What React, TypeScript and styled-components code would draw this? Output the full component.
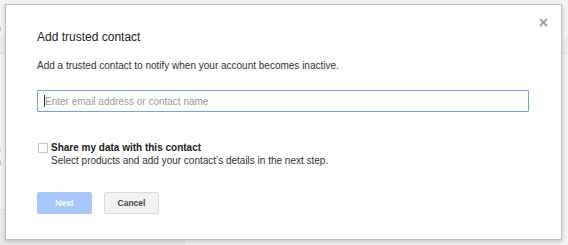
import React from "react";
import styled, { createGlobalStyle } from "styled-components";

const Global = createGlobalStyle`
  html, body { margin: 0; padding: 0; }
  body {
    width: 568px;
    height: 245px;
    overflow: hidden;
    background: #f2f2f2;
    font-family: "Liberation Sans", Arial, sans-serif;
  }
`;

const Page = styled.div`
  position: relative;
  width: 568px;
  height: 245px;
  display: flex;
  flex-direction: column;
  background: #f3f3f3;
  color: #b8b8b8;
  font-size: 10px;
  overflow: hidden;
`;

const PageTop = styled.div`
  box-sizing: border-box;
  height: 37px;
  padding-top: 22px;
  font-size: 11px;
  line-height: 12px;
  color: #aaa;
  text-indent: -5px;
`;

const PageBand = styled.div`
  height: 16px;
  background: #ececec;
  border-bottom: 1px solid #dedede;
`;

const PageBody = styled.div`
  flex: 1;
  display: flex;
  flex-direction: column;
  padding-top: 90px;
  text-indent: -4px;
  line-height: 12px;
`;

const PageFoot = styled.div`
  width: 185px;
  height: 35px;
  background: #e9e9e9;
  border-top: 1px solid #e0e0e0;
`;

const Dialog = styled.div`
  position: absolute;
  left: 5px;
  top: 4px;
  width: 557px;
  height: 236px;
  box-sizing: border-box;
  background: #fff;
  border: 1px solid #c2c2c2;
  box-shadow: 0 2px 4px rgba(0, 0, 0, 0.18);
  padding: 25px 0 0 31px;
  display: flex;
  flex-direction: column;
  align-items: flex-start;
`;

const Close = styled.button`
  position: absolute;
  top: 13px;
  right: 13px;
  width: 9px;
  height: 9px;
  padding: 0;
  border: 0;
  background: none;
  display: flex;
  cursor: pointer;
`;

const Title = styled.h2`
  margin: 0;
  font-size: 12px;
  line-height: 14px;
  font-weight: normal;
  color: #222;
`;

const Description = styled.p`
  margin: 16px 0 0;
  font-size: 10px;
  line-height: 12px;
  color: #333;
`;

const Field = styled.div`
  position: relative;
  margin-top: 18px;
  width: 492px;
  height: 22px;
`;

const Input = styled.input`
  box-sizing: border-box;
  width: 100%;
  height: 100%;
  border: 1px solid #6d9ff5;
  border-radius: 1px;
  padding: 0 0 0 7px;
  outline: none;
  font-family: inherit;
  font-size: 10px;
  color: #222;
  &::placeholder {
    color: #9a9a9a;
  }
`;

const Caret = styled.span`
  position: absolute;
  left: 7px;
  top: 5px;
  width: 1px;
  height: 12px;
  background: #333;
`;

const CheckRow = styled.label`
  margin-top: 29px;
  margin-left: 1px;
  display: flex;
  align-items: flex-start;
  gap: 3px;
`;

const Box = styled.span`
  margin-top: 1.5px;
  width: 10px;
  height: 10px;
  box-sizing: border-box;
  border: 1px solid #c6c6c6;
  border-radius: 1px;
  background: #fff;
  flex: none;
`;

const CheckText = styled.div`
  display: flex;
  flex-direction: column;
  font-size: 10px;
  line-height: 13px;
`;

const CheckTitle = styled.span<{ $bold?: boolean }>`
  font-weight: ${(p) => (p.$bold ? "bold" : "normal")};
  color: ${(p) => (p.$bold ? "#222" : "#333")};
`;

const Buttons = styled.div`
  margin-top: 25px;
  display: flex;
  gap: 12px;
`;

const Button = styled.button<{ $primary?: boolean }>`
  box-sizing: border-box;
  width: 55px;
  height: 22px;
  border-radius: 2px;
  font-family: inherit;
  font-size: 8.5px;
  font-weight: bold;
  padding: 0;
  border: 1px solid ${(p) => (p.$primary ? "#a9c9fb" : "#dadada")};
  background: ${(p) => (p.$primary ? "#a6c8fd" : "#f3f3f3")};
  color: ${(p) => (p.$primary ? "#fff" : "#444")};
`;

export default function App() {
  return (
    <>
      <Global />
      <Page>
        <PageTop>p</PageTop>
        <PageBand />
        <PageBody>
          <span>s</span>
          <span>a</span>
        </PageBody>
        <PageFoot />
        <Dialog role="dialog">
          <Close aria-label="Close">
            <svg width="9" height="9" viewBox="0 0 9 9">
              <path d="M1 1 L8 8 M8 1 L1 8" stroke="#9d9d9d" strokeWidth="1.8" />
            </svg>
          </Close>
          <Title>Add trusted contact</Title>
          <Description>
            Add a trusted contact to notify when your account becomes inactive.
          </Description>
          <Field>
            <Input placeholder="Enter email address or contact name" />
            <Caret />
          </Field>
          <CheckRow>
            <Box />
            <CheckText>
              <CheckTitle $bold>Share my data with this contact</CheckTitle>
              <CheckTitle>
                Select products and add your contact’s details in the next step.
              </CheckTitle>
            </CheckText>
          </CheckRow>
          <Buttons>
            <Button $primary disabled>
              Next
            </Button>
            <Button>Cancel</Button>
          </Buttons>
        </Dialog>
      </Page>
    </>
  );
}
